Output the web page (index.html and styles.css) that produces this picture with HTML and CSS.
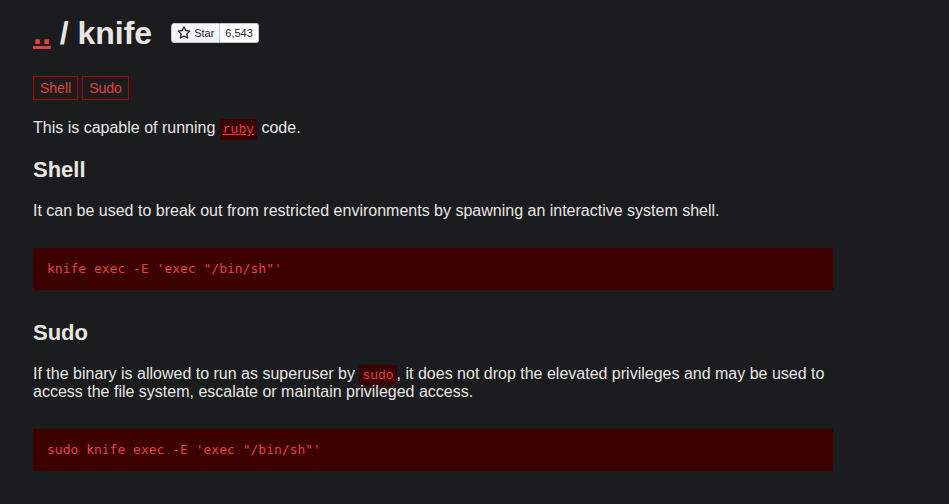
FILE: index.html
```html
<!DOCTYPE html>
<html>
<head>
<meta charset="utf-8">
<link rel="stylesheet" href="styles.css">
</head>
<body>
<main class="page">
  <header class="title-row">
    <h1 class="title"><a class="up" href="#">..</a> / knife</h1>
    <span class="gh-btn">
      <span class="gh-star">
        <svg width="14" height="14" viewBox="0 0 16 16"><path fill="#24292e" d="M8 .25a.75.75 0 0 1 .673.418l1.882 3.815 4.21.612a.75.75 0 0 1 .416 1.279l-3.046 2.970.719 4.192a.75.75 0 0 1-1.088.791L8 12.347l-3.766 1.980a.75.75 0 0 1-1.088-.790l.72-4.194L.818 6.374a.75.75 0 0 1 .416-1.280l4.210-.611L7.327.668A.75.75 0 0 1 8 .25Zm0 2.445L6.615 5.500a.75.75 0 0 1-.564.410l-3.097.450 2.240 2.184a.75.75 0 0 1 .216.664l-.528 3.084 2.769-1.456a.75.75 0 0 1 .698 0l2.770 1.456-.530-3.084a.75.75 0 0 1 .216-.664l2.240-2.183-3.096-.450a.75.75 0 0 1-.564-.410L8 2.694Z"/></svg>
        <span>Star</span>
      </span>
      <span class="gh-count">6,543</span>
    </span>
  </header>
  <ul class="tags">
    <li class="tag">Shell</li>
    <li class="tag">Sudo</li>
  </ul>
  <p class="text">This is capable of running <a class="code-link" href="#"><code class="inline">ruby</code></a> code.</p>
  <h2 class="section">Shell</h2>
  <p class="text">It can be used to break out from restricted environments by spawning an interactive system shell.</p>
  <pre class="block"><code>knife exec -E 'exec "/bin/sh"'</code></pre>
  <h2 class="section">Sudo</h2>
  <p class="text">If the binary is allowed to run as superuser by <code class="inline">sudo</code>, it does not drop the elevated privileges and may be used to access the file system, escalate or maintain privileged access.</p>
  <pre class="block"><code>sudo knife exec -E 'exec "/bin/sh"'</code></pre>
</main>
</body>
</html>
```

FILE: styles.css
```css
html, body {
  margin: 0;
  padding: 0;
  background: #1b1c1e;
}
body {
  color: #e8e6e3;
  font-family: "Liberation Sans", Arial, sans-serif;
  font-size: 16px;
}
.page {
  padding: 0 33px;
  width: 800px;
}
.title-row {
  display: flex;
  align-items: center;
  gap: 19px;
  padding-top: 15px;
}
.title {
  margin: 0;
  font-size: 32px;
  font-weight: bold;
  line-height: 37px;
}
.up {
  color: #e34040;
  text-decoration: underline;
  text-decoration-thickness: 3px;
}
.gh-btn {
  display: inline-flex;
  height: 20px;
  font-family: "Liberation Sans", Arial, sans-serif;
  font-size: 11px;
  color: #24292e;
  margin-top: -1px;
}
.gh-star {
  display: flex;
  align-items: center;
  gap: 3px;
  padding: 0 5px 0 5px;
  background: linear-gradient(#fafbfc, #eff3f6);
  border: 1px solid #c5c9cc;
  border-radius: 3px 0 0 3px;
}
.gh-count {
  display: flex;
  align-items: center;
  padding: 0 5px;
  background: #fff;
  border: 1px solid #c5c9cc;
  border-left: 0;
  border-radius: 0 3px 3px 0;
}
.tags {
  list-style: none;
  margin: 24px 0 0;
  padding: 0;
  display: flex;
  gap: 4px;
}
.tag {
  border: 1px solid #b20000;
  color: #e34040;
  font-size: 14px;
  padding: 3px 6px;
  line-height: 16px;
}
.text {
  margin: 19px 0 0;
  line-height: 18px;
}
.section {
  margin: 20px 0 0;
  font-size: 22px;
  line-height: 26px;
}
.inline {
  background: #3d0000;
  color: #e34040;
  font-family: "Liberation Mono", "Courier New", monospace;
  font-size: 13px;
  line-height: 1;
  padding: 3px 3px;
  border-radius: 3px;
}
.code-link {
  color: #e34040;
}
.block {
  margin: 28px 0 0;
  background: #3d0000;
  color: #e34040;
  font-family: "Liberation Mono", "Courier New", monospace;
  font-size: 13px;
  line-height: 15px;
  padding: 13px 14px;
}
.block code {
  line-height: 15px;
}
.block + .section {
  margin-top: 30px;
}
```
